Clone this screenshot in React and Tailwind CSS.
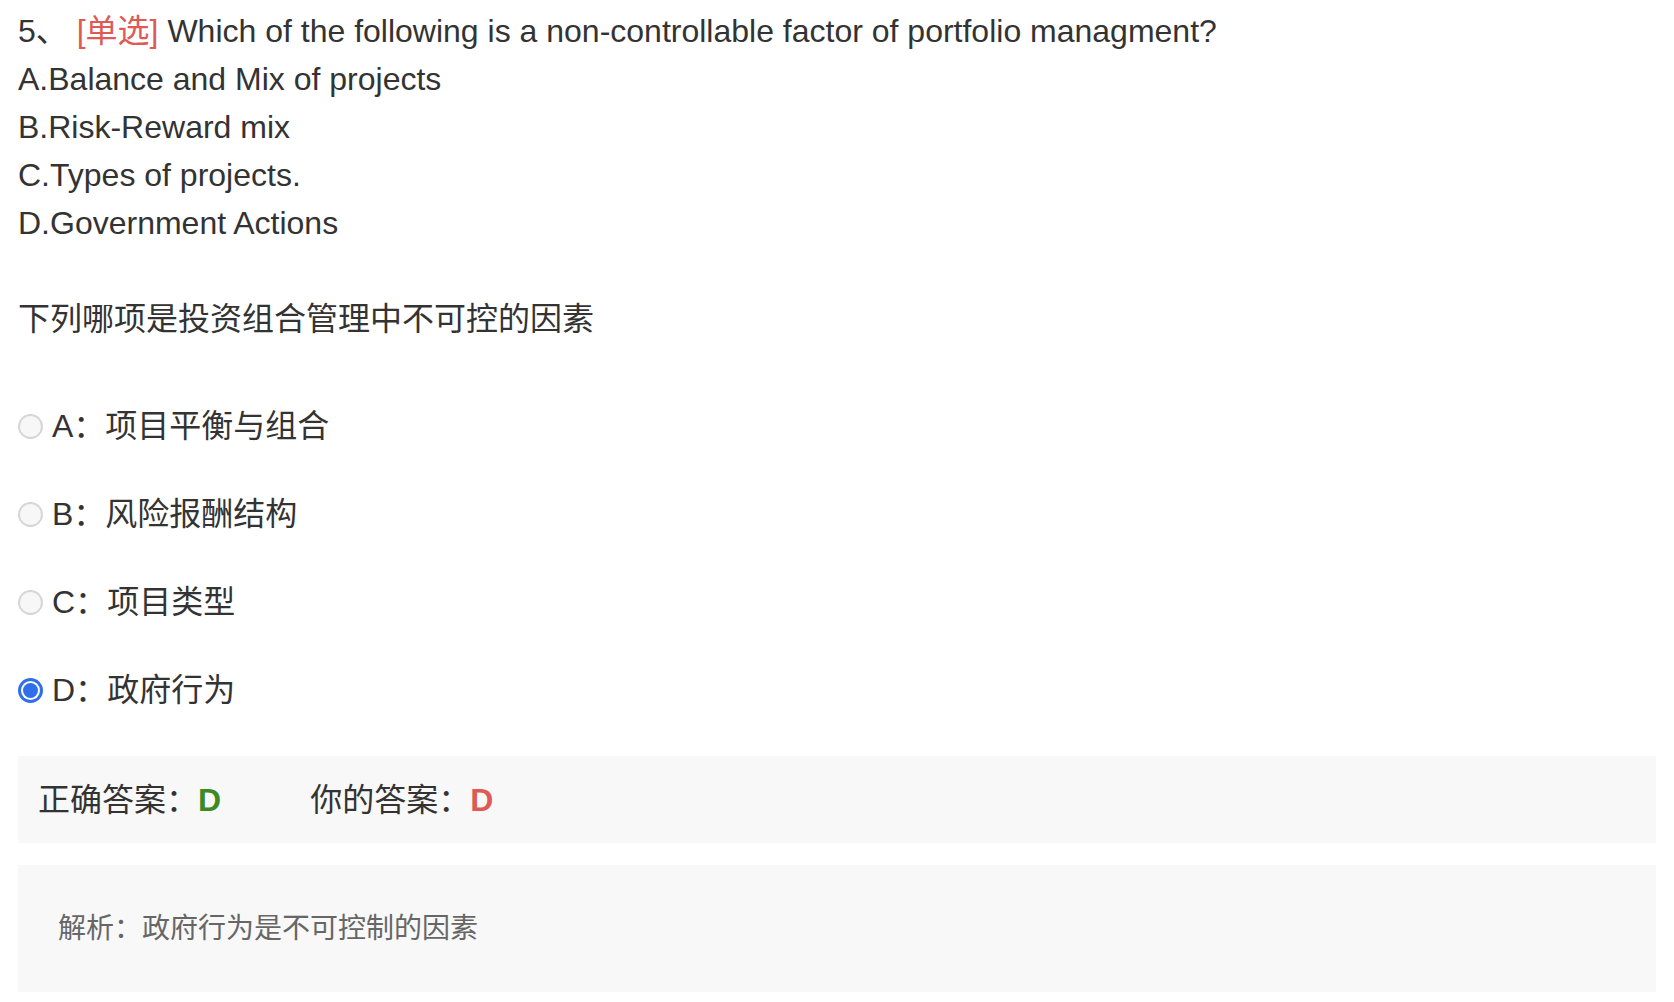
import React from "react";

const font = { fontFamily: '"Liberation Sans", "Noto Sans CJK SC", sans-serif' };

function Radio({ checked }) {
  if (checked) {
    return (
      <span className="w-[25px] h-[25px] rounded-full bg-[#2f6fea] flex items-center justify-center shrink-0">
        <span className="w-[19px] h-[19px] rounded-full bg-white flex items-center justify-center">
          <span className="w-[15px] h-[15px] rounded-full bg-[#2f6fea]" />
        </span>
      </span>
    );
  }
  return (
    <span className="w-[25px] h-[25px] rounded-full border-[2px] border-[#d6d6d6] bg-[#f7f7f7] shrink-0" />
  );
}

export default function App() {
  const options = [
    { k: "A", t: "项目平衡与组合" },
    { k: "B", t: "风险报酬结构" },
    { k: "C", t: "项目类型" },
    { k: "D", t: "政府行为", checked: true },
  ];
  return (
    <div className="bg-white min-h-[1002px] w-[1674px] px-[18px] pt-[7px] text-[#333333]" style={font}>
      <div className="text-[32px] leading-[48px]">
        <div>
          5、 <span className="text-[#e05a55]">[单选]</span> Which of the following is a non-controllable factor of portfolio managment?
        </div>
        <div>A.Balance and Mix of projects</div>
        <div>B.Risk-Reward mix</div>
        <div>C.Types of projects.</div>
        <div>D.Government Actions</div>
        <div className="h-[48px]" />
        <div>下列哪项是投资组合管理中不可控的因素</div>
      </div>

      <div className="mt-[59px] flex flex-col gap-[40px]">
        {options.map((o) => (
          <div key={o.k} className="flex items-center h-[48px] text-[32px]">
            <Radio checked={o.checked} />
            <span className="ml-[9px]">
              {o.k}：{o.t}
            </span>
          </div>
        ))}
      </div>

      <div className="mt-[42px] h-[87px] bg-[#f8f8f8] flex items-center pl-[20px] text-[32px]">
        <span>正确答案：</span>
        <span className="font-bold text-[#3b8a23]">D</span>
        <span className="ml-[89px]">你的答案：</span>
        <span className="font-bold text-[#e05a55]">D</span>
      </div>

      <div className="mt-[22px] h-[127px] bg-[#f8f8f8] flex items-center pl-[40px] text-[28px] text-[#666666]">
        解析：政府行为是不可控制的因素
      </div>
    </div>
  );
}
